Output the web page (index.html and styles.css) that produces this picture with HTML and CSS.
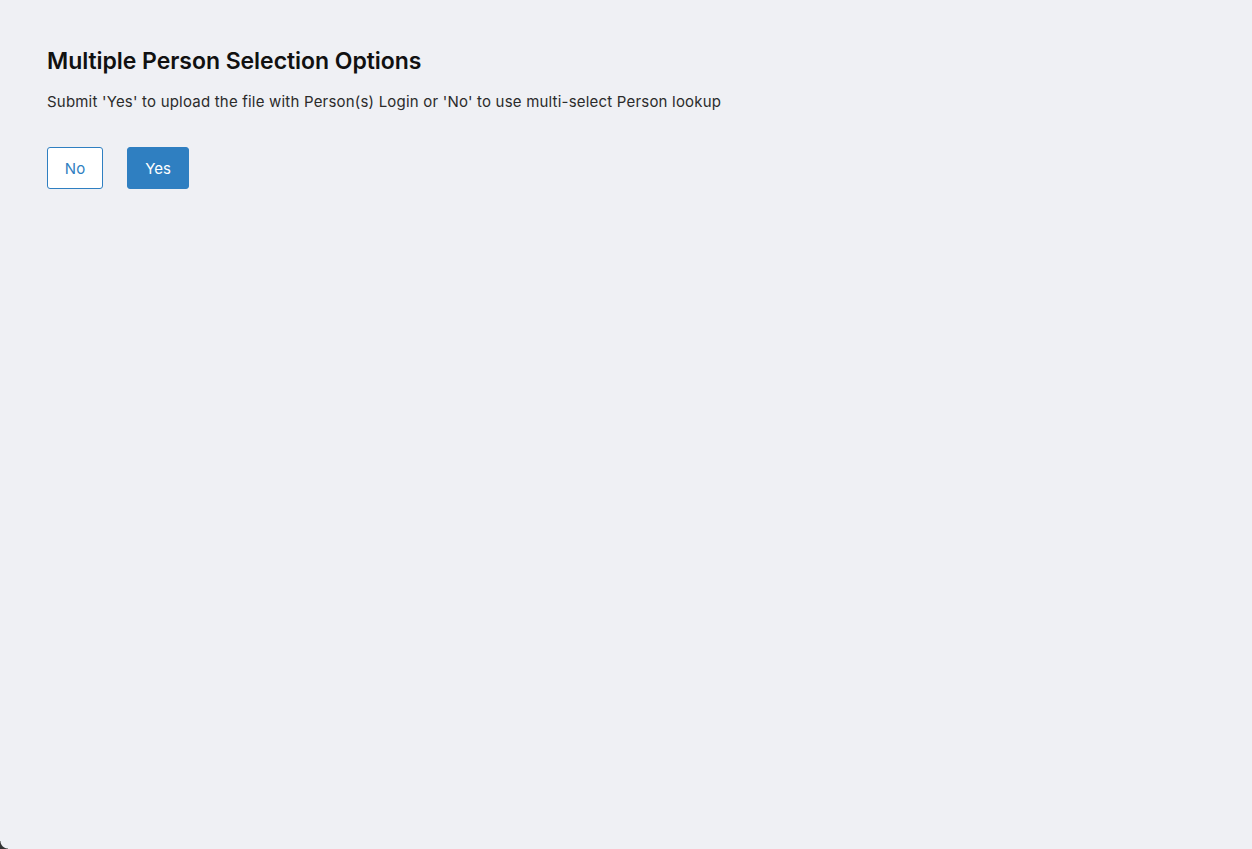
FILE: index.html
```html
<!DOCTYPE html>
<html>
<head>
<meta charset="utf-8">
<link rel="stylesheet" href="styles.css">
</head>
<body>
<div class="page">
  <main class="content">
    <h1 class="title">Multiple Person Selection Options</h1>
    <p class="desc">Submit 'Yes' to upload the file with Person(s) Login or 'No' to use multi-select Person lookup</p>
    <div class="actions">
      <button class="btn btn-outline">No</button>
      <button class="btn btn-primary">Yes</button>
    </div>
  </main>
  <div class="corner"></div>
</div>
</body>
</html>
```
FILE: styles.css
```css
html, body {
  margin: 0;
  padding: 0;
  height: 100%;
  background: #eff0f4;
}
body {
  font-family: "Inter", "Roboto", "Liberation Sans", sans-serif;
  color: #222;
}
.page {
  position: relative;
  height: 100%;
  overflow: hidden;
}
.content {
  padding: 45px 47px 0;
}
.title {
  margin: 0;
  font-size: 23px;
  font-weight: 600;
  color: #111;
  letter-spacing: -0.05px;
  line-height: 32px;
}
.desc {
  margin: 15px 0 0;
  font-size: 15px;
  letter-spacing: 0.2px;
  line-height: 20px;
  color: #2b2b2b;
}
.actions {
  display: flex;
  gap: 24px;
  margin-top: 35px;
}
.btn {
  height: 42px;
  border-radius: 3px;
  font-family: inherit;
  font-size: 15px;
  padding: 0;
  cursor: pointer;
}
.btn-outline {
  width: 56px;
  background: #fff;
  border: 1px solid #2f7fc1;
  color: #2f7fc1;
}
.btn-primary {
  width: 62px;
  background: #2f7fc1;
  border: 1px solid #2f7fc1;
  color: #fff;
}
.corner {
  position: absolute;
  left: 0;
  bottom: 0;
  width: 8px;
  height: 8px;
  background: radial-gradient(circle at 100% 0, transparent 7px, #333 8px);
}
```
